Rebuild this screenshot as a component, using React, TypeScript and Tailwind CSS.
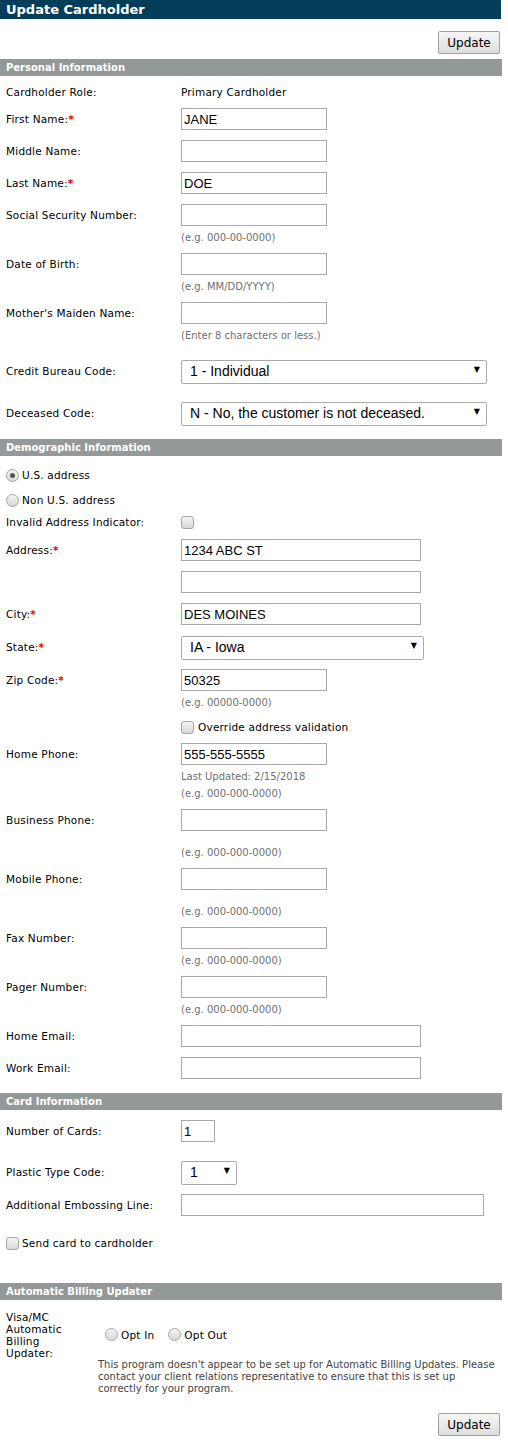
import React from "react";

const ui = { fontFamily: '"DejaVu Sans", Verdana, sans-serif' };
const field = { fontFamily: '"Liberation Sans", Arial, sans-serif' };

// label text in the original is a touch wider than DejaVu at 10px
const txt = "text-[10.5px] tracking-[0.2px]";

function Bar({ title, className = "" }: { title: string; className?: string }) {
  return (
    <div className={`h-[17px] bg-[#959898] flex items-center pl-[6px] ${className}`}>
      <span className="text-white font-bold text-[10px] leading-none">{title}</span>
    </div>
  );
}

function Req() {
  return <span className="text-[#e00000] font-bold">*</span>;
}

function Label({ children }: { children: React.ReactNode }) {
  return <div className={`w-[181px] shrink-0 pl-[6px] pt-[2px] text-black ${txt}`}>{children}</div>;
}

function TextInput({ value = "", w = "w-[146px]" }: { value?: string; w?: string }) {
  return (
    <input
      readOnly
      value={value}
      style={field}
      className={`${w} h-[22px] border border-[#a9a9a9] bg-white px-[2px] text-[13px] text-black outline-none`}
    />
  );
}

function Select({ value, w }: { value: string; w: string }) {
  return (
    <div className={`relative ${w} h-[24px]`}>
      <select
        value={value}
        onChange={() => {}}
        style={field}
        className="appearance-none w-full h-full border border-[#aaa] rounded-[2px] bg-white pl-[8px] text-[14px] text-black outline-none"
      >
        <option value={value}>{value}</option>
      </select>
      <span className="pointer-events-none absolute right-[7px] top-[7px] text-[8px] leading-none text-black">▼</span>
    </div>
  );
}

function Row({ label, children, className = "" }: { label: React.ReactNode; children?: React.ReactNode; className?: string }) {
  return (
    <div className={`flex items-center ${className}`}>
      <Label>{label}</Label>
      {children}
    </div>
  );
}

function Hint({ children, className = "mt-[4px]" }: { children: React.ReactNode; className?: string }) {
  return (
    <div className={`h-[14px] pl-[181px] flex items-center text-[10px] text-[#707070] ${className}`}>{children}</div>
  );
}

function Radio({ checked = false }: { checked?: boolean }) {
  return (
    <span className="w-[13px] h-[13px] rounded-full border border-[#a6a6a6] bg-gradient-to-b from-[#f4f4f4] to-[#d8d8d8] flex items-center justify-center shrink-0">
      {checked && <span className="w-[5px] h-[5px] rounded-full bg-[#555]" />}
    </span>
  );
}

function Check() {
  return (
    <span className="w-[13px] h-[13px] rounded-[3px] border border-[#a6a6a6] bg-gradient-to-b from-[#f4f4f4] to-[#d8d8d8] shrink-0" />
  );
}

function UpdateButton({ className = "" }: { className?: string }) {
  return (
    <div className={`flex justify-end pr-[2px] ${className}`}>
      <button className="w-[62px] h-[23px] border border-[#a0a0a0] rounded-[2px] bg-gradient-to-b from-[#f6f6f6] to-[#dedede] text-[12px] text-black leading-none">
        Update
      </button>
    </div>
  );
}

export default function App() {
  return (
    <div style={ui} className="w-[502px] bg-white text-black pb-[12px]">
      <div className="h-[19px] w-[501px] bg-[#023e5a] flex items-center pl-[6px]">
        <span className="text-white font-bold text-[13px] leading-none">Update Cardholder</span>
      </div>

      <UpdateButton className="mt-[12px]" />

      <Bar title="Personal Information" className="mt-[5px]" />
      <Row label="Cardholder Role:" className="mt-[8px] h-[16px]">
        <span className={`pt-[2px] ${txt}`}>Primary Cardholder</span>
      </Row>
      <Row label={<>First Name:<Req /></>} className="mt-[8px]">
        <TextInput value="JANE" />
      </Row>
      <Row label="Middle Name:" className="mt-[10px]">
        <TextInput />
      </Row>
      <Row label={<>Last Name:<Req /></>} className="mt-[10px]">
        <TextInput value="DOE" />
      </Row>
      <Row label="Social Security Number:" className="mt-[10px]">
        <TextInput />
      </Row>
      <Hint>(e.g. 000-00-0000)</Hint>
      <Row label="Date of Birth:" className="mt-[9px]">
        <TextInput />
      </Row>
      <Hint>(e.g. MM/DD/YYYY)</Hint>
      <Row label="Mother's Maiden Name:" className="mt-[9px]">
        <TextInput />
      </Row>
      <Hint>(Enter 8 characters or less.)</Hint>
      <Row label="Credit Bureau Code:" className="mt-[17px]">
        <Select value="1 - Individual" w="w-[306px]" />
      </Row>
      <Row label="Deceased Code:" className="mt-[18px]">
        <Select value="N - No, the customer is not deceased." w="w-[306px]" />
      </Row>

      <Bar title="Demographic Information" className="mt-[14px]" />
      <div className={`mt-[12px] h-[14px] flex items-center gap-[3px] pl-[6px] ${txt}`}>
        <Radio checked />
        <span className="pt-[2px]">U.S. address</span>
      </div>
      <div className={`mt-[11px] h-[14px] flex items-center gap-[3px] pl-[6px] ${txt}`}>
        <Radio />
        <span className="pt-[2px]">Non U.S. address</span>
      </div>
      <Row label="Invalid Address Indicator:" className="mt-[8px] h-[14px]">
        <Check />
      </Row>
      <Row label={<>Address:<Req /></>} className="mt-[10px]">
        <TextInput value="1234 ABC ST" w="w-[240px]" />
      </Row>
      <Row label="" className="mt-[10px]">
        <TextInput w="w-[240px]" />
      </Row>
      <Row label={<>City:<Req /></>} className="mt-[10px]">
        <TextInput value="DES MOINES" w="w-[240px]" />
      </Row>
      <Row label={<>State:<Req /></>} className="mt-[10px]">
        <Select value="IA - Iowa" w="w-[243px]" />
      </Row>
      <Row label={<>Zip Code:<Req /></>} className="mt-[10px]">
        <TextInput value="50325" />
      </Row>
      <Hint>(e.g. 00000-0000)</Hint>
      <div className={`mt-[11px] h-[14px] flex items-center gap-[4px] pl-[181px] ${txt}`}>
        <Check />
        <span className="pt-[2px]">Override address validation</span>
      </div>
      <Row label="Home Phone:" className="mt-[9px]">
        <TextInput value="555-555-5555" />
      </Row>
      <Hint>Last Updated: 2/15/2018</Hint>
      <Hint className="mt-[3px]">(e.g. 000-000-0000)</Hint>
      <Row label="Business Phone:" className="mt-[9px]">
        <TextInput />
      </Row>
      <Hint className="mt-[14px]">(e.g. 000-000-0000)</Hint>
      <Row label="Mobile Phone:" className="mt-[9px]">
        <TextInput />
      </Row>
      <Hint className="mt-[14px]">(e.g. 000-000-0000)</Hint>
      <Row label="Fax Number:" className="mt-[9px]">
        <TextInput />
      </Row>
      <Hint>(e.g. 000-000-0000)</Hint>
      <Row label="Pager Number:" className="mt-[9px]">
        <TextInput />
      </Row>
      <Hint>(e.g. 000-000-0000)</Hint>
      <Row label="Home Email:" className="mt-[9px]">
        <TextInput w="w-[240px]" />
      </Row>
      <Row label="Work Email:" className="mt-[10px]">
        <TextInput w="w-[240px]" />
      </Row>

      <Bar title="Card Information" className="mt-[14px]" />
      <Row label="Number of Cards:" className="mt-[10px]">
        <TextInput value="1" w="w-[34px]" />
      </Row>
      <Row label="Plastic Type Code:" className="mt-[18px]">
        <Select value="1" w="w-[56px]" />
      </Row>
      <Row label="Additional Embossing Line:" className="mt-[10px]">
        <TextInput w="w-[303px]" />
      </Row>
      <div className={`mt-[20px] h-[14px] flex items-center gap-[3px] pl-[6px] ${txt}`}>
        <Check />
        <span className="pt-[2px]">Send card to cardholder</span>
      </div>

      <Bar title="Automatic Billing Updater" className="mt-[33px]" />
      <div className="mt-[10px] flex items-center">
        <div className={`w-[105px] shrink-0 pl-[6px] pt-[1px] leading-[12px] ${txt}`}>
          Visa/MC<br />Automatic<br />Billing<br />Updater:
        </div>
        <div className={`flex items-center ${txt}`}>
          <Radio />
          <span className="ml-[3px] pt-[2px]">Opt In</span>
          <span className="ml-[14px]"><Radio /></span>
          <span className="ml-[3px] pt-[2px]">Opt Out</span>
        </div>
      </div>
      <p className="mt-0 ml-[98px] w-[400px] text-[10px] leading-[12px] text-[#444]">
        This program doesn't appear to be set up for Automatic Billing Updates. Please contact your client relations representative to ensure that this is set up correctly for your program.
      </p>
      <UpdateButton className="mt-[18px]" />
    </div>
  );
}
